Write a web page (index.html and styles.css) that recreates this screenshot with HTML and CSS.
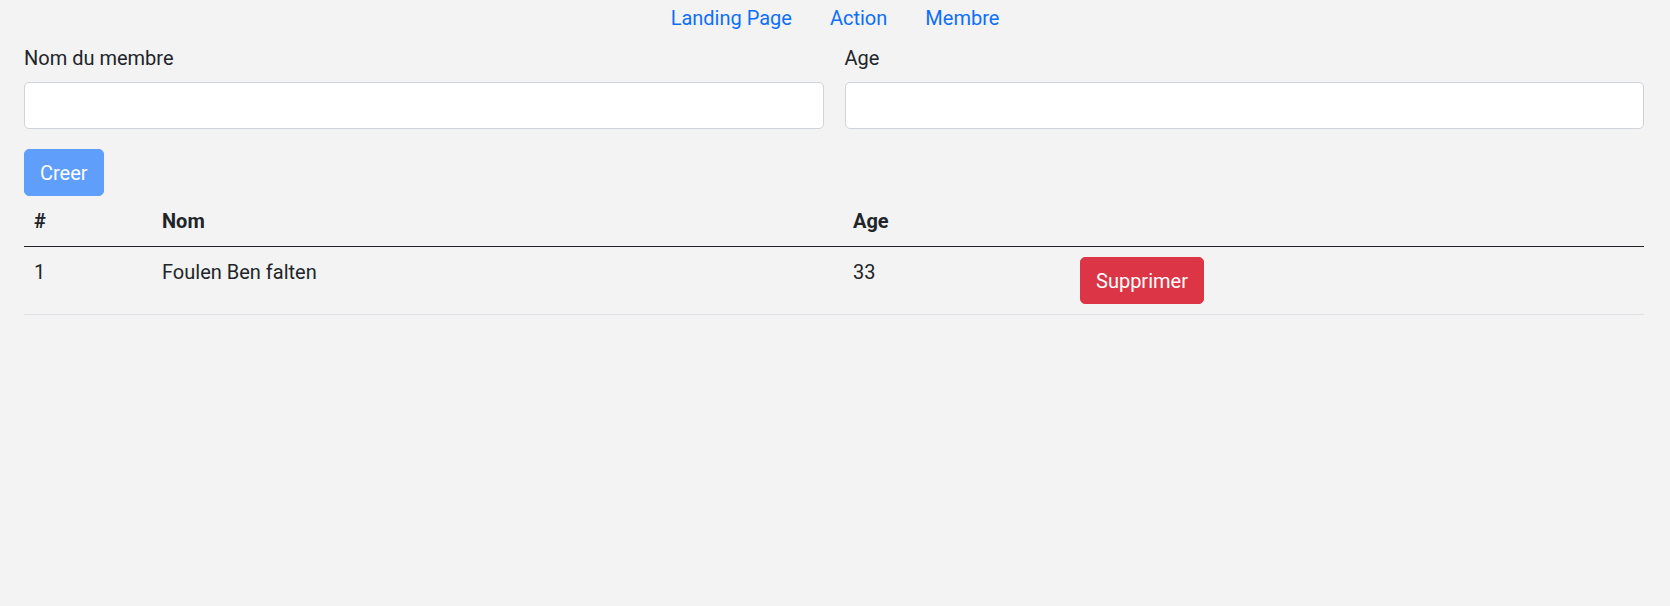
FILE: index.html
```html
<!DOCTYPE html>
<html lang="fr">
<head>
<meta charset="utf-8">
<title>Membre</title>
<link rel="stylesheet" href="styles.css">
</head>
<body>
<nav class="nav">
  <a class="nav-link" href="#">Landing Page</a>
  <a class="nav-link" href="#">Action</a>
  <a class="nav-link" href="#">Membre</a>
</nav>
<main class="page">
  <form class="form-row">
    <div class="field">
      <label class="form-label" for="nom">Nom du membre</label>
      <input class="form-control" id="nom" type="text">
    </div>
    <div class="field">
      <label class="form-label" for="age">Age</label>
      <input class="form-control" id="age" type="text">
    </div>
  </form>
  <button class="btn btn-primary-disabled" type="button">Creer</button>
  <table class="table">
    <thead>
      <tr>
        <th class="col-id">#</th>
        <th class="col-nom">Nom</th>
        <th class="col-age">Age</th>
        <th class="col-act"></th>
      </tr>
    </thead>
    <tbody>
      <tr>
        <td>1</td>
        <td>Foulen Ben falten</td>
        <td>33</td>
        <td><button class="btn btn-danger" type="button">Supprimer</button></td>
      </tr>
    </tbody>
  </table>
</main>
</body>
</html>
```
FILE: styles.css
```css
* {
  box-sizing: border-box;
}

html, body {
  margin: 0;
  padding: 0;
}

body {
  background: #f3f3f3;
  color: #212529;
  font-family: Roboto, "Liberation Sans", sans-serif;
  font-size: 20px;
  line-height: 30px;
  min-height: 606px;
}

.nav {
  display: flex;
  justify-content: center;
  padding-top: 3px;
}

.nav-link {
  color: #0d6efd;
  text-decoration: none;
  padding: 0 19px;
  line-height: 30px;
}

.page {
  padding: 10px 26px 0 24px;
}

.form-row {
  display: grid;
  grid-template-columns: 1fr 1fr;
  column-gap: 21px;
  margin: 0;
}

.field {
  display: flex;
  flex-direction: column;
}

.form-label {
  display: block;
  margin-bottom: 9px;
  line-height: 30px;
}

.form-control {
  display: block;
  width: 100%;
  height: 47px;
  background: #fff;
  border: 1px solid #ced4da;
  border-radius: 5px;
  font: inherit;
  padding: 7px 15px;
}

.btn {
  display: inline-block;
  font: inherit;
  line-height: 30px;
  height: 47px;
  padding: 7px 15px;
  border: 1px solid transparent;
  border-radius: 5px;
  color: #fff;
}

.btn-primary-disabled {
  margin-top: 20px;
  background: #5f9efa;
  border-color: #5f9efa;
  vertical-align: top;
}

.btn-danger {
  background: #dc3545;
  border-color: #dc3545;
}

.table {
  width: 100%;
  border-collapse: collapse;
  table-layout: fixed;
  margin-top: 0;
}

.table th,
.table td {
  padding: 10px;
  text-align: left;
  vertical-align: top;
}

.table th {
  font-weight: 700;
  border-bottom: 1px solid #212529;
}

.table td {
  border-bottom: 1px solid #dee2e6;
}

.col-id { width: 128px; }
.col-nom { width: 691px; }
.col-age { width: 227px; }
```
